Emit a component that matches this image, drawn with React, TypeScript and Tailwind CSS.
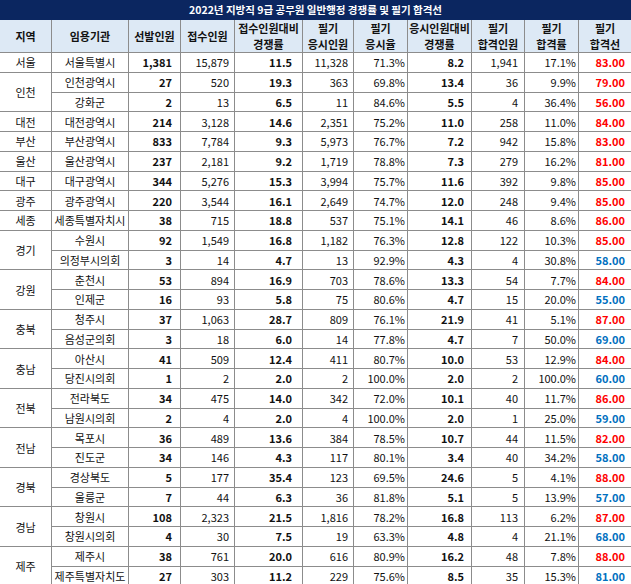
import React from "react";

type Row = {
  region?: string;
  span?: number;
  org: string;
  v: string[];
  cut: string;
  blue?: boolean;
};

const rows: Row[] = [
  { region: "서울", span: 1, org: "서울특별시", v: ["1,381", "15,879", "11.5", "11,328", "71.3%", "8.2", "1,941", "17.1%"], cut: "83.00" },
  { region: "인천", span: 2, org: "인천광역시", v: ["27", "520", "19.3", "363", "69.8%", "13.4", "36", "9.9%"], cut: "79.00" },
  { org: "강화군", v: ["2", "13", "6.5", "11", "84.6%", "5.5", "4", "36.4%"], cut: "56.00" },
  { region: "대전", span: 1, org: "대전광역시", v: ["214", "3,128", "14.6", "2,351", "75.2%", "11.0", "258", "11.0%"], cut: "84.00" },
  { region: "부산", span: 1, org: "부산광역시", v: ["833", "7,784", "9.3", "5,973", "76.7%", "7.2", "942", "15.8%"], cut: "83.00" },
  { region: "울산", span: 1, org: "울산광역시", v: ["237", "2,181", "9.2", "1,719", "78.8%", "7.3", "279", "16.2%"], cut: "81.00" },
  { region: "대구", span: 1, org: "대구광역시", v: ["344", "5,276", "15.3", "3,994", "75.7%", "11.6", "392", "9.8%"], cut: "85.00" },
  { region: "광주", span: 1, org: "광주광역시", v: ["220", "3,544", "16.1", "2,649", "74.7%", "12.0", "248", "9.4%"], cut: "85.00" },
  { region: "세종", span: 1, org: "세종특별자치시", v: ["38", "715", "18.8", "537", "75.1%", "14.1", "46", "8.6%"], cut: "86.00" },
  { region: "경기", span: 2, org: "수원시", v: ["92", "1,549", "16.8", "1,182", "76.3%", "12.8", "122", "10.3%"], cut: "85.00" },
  { org: "의정부시의회", v: ["3", "14", "4.7", "13", "92.9%", "4.3", "4", "30.8%"], cut: "58.00", blue: true },
  { region: "강원", span: 2, org: "춘천시", v: ["53", "894", "16.9", "703", "78.6%", "13.3", "54", "7.7%"], cut: "84.00" },
  { org: "인제군", v: ["16", "93", "5.8", "75", "80.6%", "4.7", "15", "20.0%"], cut: "55.00", blue: true },
  { region: "충북", span: 2, org: "청주시", v: ["37", "1,063", "28.7", "809", "76.1%", "21.9", "41", "5.1%"], cut: "87.00" },
  { org: "음성군의회", v: ["3", "18", "6.0", "14", "77.8%", "4.7", "7", "50.0%"], cut: "69.00", blue: true },
  { region: "충남", span: 2, org: "아산시", v: ["41", "509", "12.4", "411", "80.7%", "10.0", "53", "12.9%"], cut: "84.00" },
  { org: "당진시의회", v: ["1", "2", "2.0", "2", "100.0%", "2.0", "2", "100.0%"], cut: "60.00", blue: true },
  { region: "전북", span: 2, org: "전라북도", v: ["34", "475", "14.0", "342", "72.0%", "10.1", "40", "11.7%"], cut: "86.00" },
  { org: "남원시의회", v: ["2", "4", "2.0", "4", "100.0%", "2.0", "1", "25.0%"], cut: "59.00", blue: true },
  { region: "전남", span: 2, org: "목포시", v: ["36", "489", "13.6", "384", "78.5%", "10.7", "44", "11.5%"], cut: "82.00" },
  { org: "진도군", v: ["34", "146", "4.3", "117", "80.1%", "3.4", "40", "34.2%"], cut: "58.00", blue: true },
  { region: "경북", span: 2, org: "경상북도", v: ["5", "177", "35.4", "123", "69.5%", "24.6", "5", "4.1%"], cut: "88.00" },
  { org: "울릉군", v: ["7", "44", "6.3", "36", "81.8%", "5.1", "5", "13.9%"], cut: "57.00", blue: true },
  { region: "경남", span: 2, org: "창원시", v: ["108", "2,323", "21.5", "1,816", "78.2%", "16.8", "113", "6.2%"], cut: "87.00" },
  { org: "창원시의회", v: ["4", "30", "7.5", "19", "63.3%", "4.8", "4", "21.1%"], cut: "68.00", blue: true },
  { region: "제주", span: 2, org: "제주시", v: ["38", "761", "20.0", "616", "80.9%", "16.2", "48", "7.8%"], cut: "88.00" },
  { org: "제주특별자치도", v: ["27", "303", "11.2", "229", "75.6%", "8.5", "35", "15.3%"], cut: "81.00", blue: true },
];

// per-column padding and weight for the eight number columns
const numCls = [
  "pr-[8px] font-bold",
  "pr-[5px]",
  "pr-[10px] font-bold",
  "pr-[5px]",
  "pr-[2px]",
  "pr-[7px] font-bold",
  "pr-[6px]",
  "pr-[2px]",
];

const cell = "border border-[#8c8c8c] p-0 align-middle";

export default function App() {
  return (
    <div className="w-[631px] h-[584px] overflow-hidden bg-white text-[#111] text-[11px] [font-family:'Noto_Sans_CJK_KR','Noto_Sans',sans-serif]">
      <table className="table-fixed border-collapse w-[631px] -ml-px" style={{ width: 632 }}>
        <colgroup>
          <col className="w-[52px]" />
          <col className="w-[77px]" />
          <col className="w-[52px]" />
          <col className="w-[54px]" />
          <col className="w-[68px]" />
          <col className="w-[51px]" />
          <col className="w-[54px]" />
          <col className="w-[64px]" />
          <col className="w-[53px]" />
          <col className="w-[54px]" />
          <col className="w-[53px]" />
        </colgroup>
        <thead>
          <tr className="h-[18px]">
            <th colSpan={11} className="bg-[#0b2660] text-white text-[10.5px] font-bold leading-[18px] p-0 border border-[#0b2660]">
              2022년 지방직 9급 공무원 일반행정 경쟁률 및 필기 합격선
            </th>
          </tr>
          <tr className="h-[33px] bg-[#dde9f5] font-bold leading-[16px]">
            <th className={cell}>지역</th>
            <th className={cell}>임용기관</th>
            <th className={cell}>선발인원</th>
            <th className={cell}>접수인원</th>
            <th className={cell}>접수인원대비<br />경쟁률</th>
            <th className={cell}>필기<br />응시인원</th>
            <th className={cell}>필기<br />응시율</th>
            <th className={cell}>응시인원대비<br />경쟁률</th>
            <th className={cell}>필기<br />합격인원</th>
            <th className={cell}>필기<br />합격률</th>
            <th className={cell}>필기<br />합격선</th>
          </tr>
        </thead>
        <tbody>
          {rows.map((r, i) => (
            <tr key={i} className="h-[19.76px] leading-[14px]">
              {r.region && (
                <td rowSpan={r.span} className={cell + " text-center"}>
                  {r.region}
                </td>
              )}
              <td className={cell + " text-center"}>{r.org}</td>
              {r.v.map((x, j) => (
                <td key={j} className={cell + " text-right " + numCls[j]}>
                  {x}
                </td>
              ))}
              <td className={cell + " text-right pr-[6px] font-bold " + (r.blue ? "text-[#0070c0]" : "text-[#ff0000]")}>
                {r.cut}
              </td>
            </tr>
          ))}
        </tbody>
      </table>
    </div>
  );
}
